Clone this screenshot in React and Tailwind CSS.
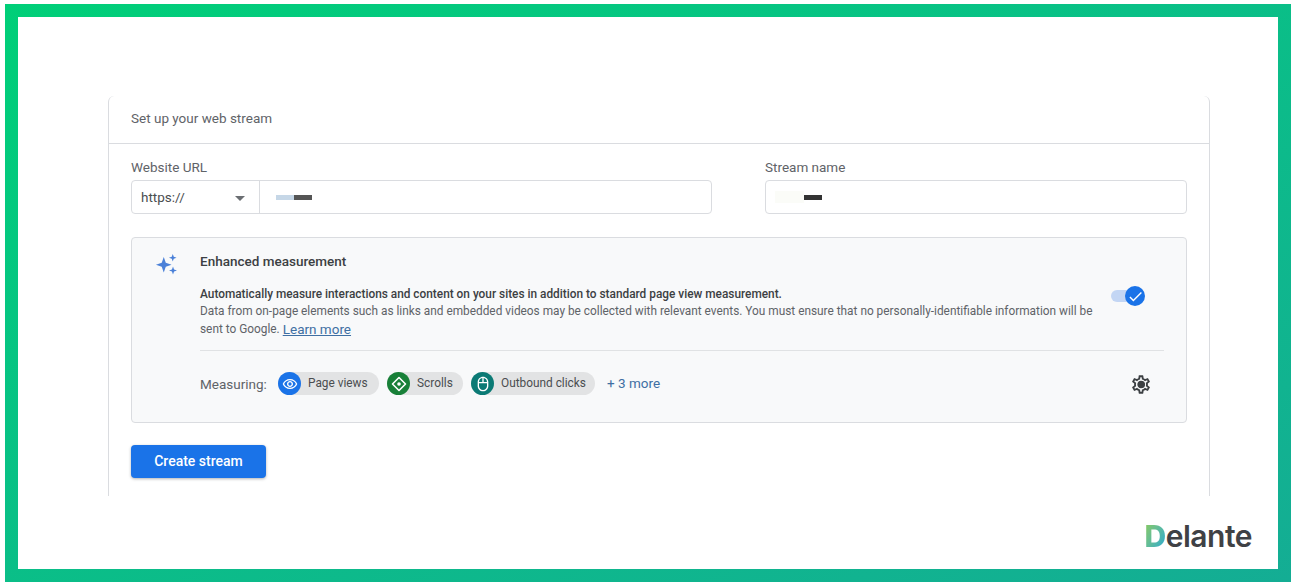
import { MdOutlineRemoveRedEye, MdOutlineMouse, MdOutlineSettings, MdCheck } from "react-icons/md";

const STAR = "M12 2 L14.6 9.4 L22 12 L14.6 14.6 L12 22 L9.4 14.6 L2 12 L9.4 9.4 Z";

function Sparkles() {
  return (
    <svg width="24" height="24" viewBox="0 0 24 24" className="shrink-0 text-[#4a80d8]" fill="currentColor">
      <path d={STAR} transform="translate(0.4 4.4) scale(0.78)" />
      <path d={STAR} transform="translate(14.2 2.2) scale(0.38)" />
      <path d={STAR} transform="translate(14.2 14.7) scale(0.4)" />
    </svg>
  );
}

function ScrollIcon() {
  return (
    <svg width="16" height="16" viewBox="0 0 16 16" fill="none" stroke="white" strokeWidth="1.6">
      <path d="M8 1.5 L14.5 8 L8 14.5 L1.5 8 Z" strokeLinejoin="round" />
      <circle cx="8" cy="8" r="1.8" fill="white" stroke="none" />
    </svg>
  );
}

function Chip({ color, label, width, children }) {
  return (
    <div className={`flex h-[23px] items-center rounded-full bg-[#e2e3e4] ${width}`}>
      <span className={`flex h-[23px] w-[23px] shrink-0 items-center justify-center rounded-full ${color}`}>
        {children}
      </span>
      <span className="ml-[7px] text-[11.85px] text-[#4a4d50]">{label}</span>
    </div>
  );
}

export default function App() {
  return (
    <div className="h-[585px] w-[1294px] bg-white pt-[4px] pr-[3px] pb-[3px] pl-[5px] font-['Roboto',sans-serif]">
      <div className="h-full bg-gradient-to-br from-[#00cf78] to-[#14ad94] p-[13px]">
        <div className="h-full bg-white pt-[79px] pl-[90px]">
          {/* Card */}
          <div className="h-[400px] w-[1102px] rounded-t-[6px] border-x border-[#dadce0]">
            <div className="flex h-[48px] items-center border-b border-[#dadce0] pb-[2px] pl-[22px] text-[13.5px] text-[#5f6368]">
              Set up your web stream
            </div>

            <div className="px-[22px] pt-[13px]">
              {/* Fields */}
              <div className="flex gap-[53px]">
                <div className="w-[581px]">
                  <div className="h-[23px] text-[13.5px] leading-[20px] text-[#5f6368]">Website URL</div>
                  <div className="flex h-[34px] rounded-[4px] border border-[#dadce0]">
                    <div className="flex w-[128px] items-center justify-between border-r border-[#dadce0] pr-[14px] pl-[9px] text-[13.5px] text-[#4a4d50]">
                      https://
                      <span className="mt-[2px] h-0 w-0 border-x-[5px] border-t-[5px] border-x-transparent border-t-[#6b6e72]" />
                    </div>
                    <div className="flex items-center pl-[16px]">
                      <span className="h-[5px] w-[18px] bg-[#c6d7e7]" />
                      <span className="h-[5px] w-[18px] bg-[#555555]" />
                    </div>
                  </div>
                </div>
                <div className="w-[422px]">
                  <div className="h-[23px] text-[13.5px] leading-[20px] text-[#5f6368]">Stream name</div>
                  <div className="flex h-[34px] items-center rounded-[4px] border border-[#dadce0] pl-[9px]">
                    <span className="h-[12px] w-[29px] bg-[#fbfcf8]" />
                    <span className="h-[5px] w-[18px] bg-[#333333]" />
                  </div>
                </div>
              </div>

              {/* Enhanced measurement */}
              <div className="mt-[23px] flex h-[186px] w-[1056px] rounded-[4px] border border-[#dadce0] bg-[#f8f9fa] pt-[13px] pl-[22px]">
                <Sparkles />
                <div className="ml-[22px] w-[964px]">
                  <div className="text-[13.5px] leading-[20px] font-medium text-[#3c4043]">Enhanced measurement</div>
                  <div className="mt-[16px] flex justify-between border-b border-[#e0e2e4] pb-[12px]">
                    <div className="w-[900px] text-[11.85px] leading-[18px] text-[#5f6368]">
                      <div className="leading-[15px] font-medium text-[#3c4043]">
                        Automatically measure interactions and content on your sites in addition to standard page view measurement.
                      </div>
                      <div>
                        Data from on-page elements such as links and embedded videos may be collected with relevant events. You must ensure that no personally-identifiable information will be
                      </div>
                      <div className="flex items-center gap-[3px]">
                        <span>sent to Google.</span>
                        <a className="text-[13.5px] leading-[18px] text-[#3f6fa3] underline">Learn more</a>
                      </div>
                    </div>
                    <div className="mr-[29px] flex h-[18px] items-center">
                      <div className="relative h-[12px] w-[24px] rounded-full bg-[#c3d6f4]">
                        <span className="absolute top-[-4px] left-[14px] flex h-[20px] w-[20px] items-center justify-center rounded-full bg-[#1a73e8] text-white">
                          <MdCheck size={17} />
                        </span>
                      </div>
                    </div>
                  </div>
                  <div className="mt-[21px] flex items-center">
                    <span className="w-[78px] text-[13.5px] text-[#5f6368]">Measuring:</span>
                    <div className="mb-[2px] flex items-center gap-[8px]">
                      <Chip color="bg-[#1a73e8]" label="Page views" width="w-[101px]">
                        <MdOutlineRemoveRedEye size={16} color="white" />
                      </Chip>
                      <Chip color="bg-[#188038]" label="Scrolls" width="w-[76px]">
                        <ScrollIcon />
                      </Chip>
                      <Chip color="bg-[#0b7a75]" label="Outbound clicks" width="w-[124px]">
                        <MdOutlineMouse size={16} color="white" />
                      </Chip>
                    </div>
                    <span className="mb-[2px] ml-[12px] text-[13.5px] text-[#3f6fa3]">+ 3 more</span>
                    <span className="relative mr-[12px] ml-auto flex h-[22px] w-[22px] items-center justify-center text-[#3c4043]">
                      <MdOutlineSettings size={23} />
                      <span className="absolute h-[7px] w-[7px] rounded-full bg-[#3c4043]" />
                    </span>
                  </div>
                </div>
              </div>

              <button className="mt-[22px] flex h-[33px] w-[135px] items-center justify-center rounded-[4px] bg-[#1a73e8] text-[14px] font-medium text-white shadow-[0_1px_3px_rgba(60,64,67,0.4)]">
                Create stream
              </button>
            </div>
          </div>

          {/* Logo */}
          <div className="mt-[22px] flex justify-end pr-[26px] font-['Inter',sans-serif] text-[30px] leading-[36px] font-semibold tracking-[-0.5px] text-[#3f4145]">
            <span className="bg-gradient-to-br from-[#8fcb4a] to-[#12a5d8] bg-clip-text font-extrabold text-transparent">D</span>
            elante
          </div>
        </div>
      </div>
    </div>
  );
}
